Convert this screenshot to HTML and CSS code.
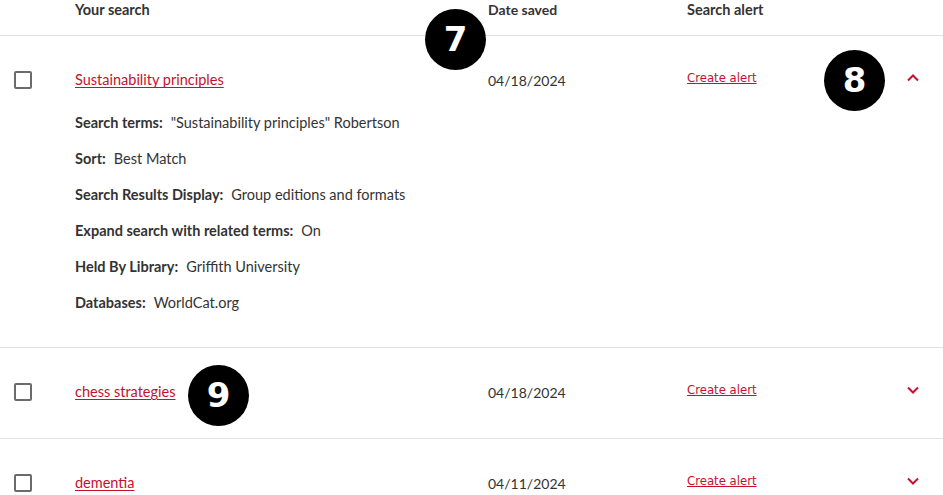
FILE: index.html
```html
<!DOCTYPE html>
<html lang="en">
<head>
<meta charset="utf-8">
<title>Saved searches</title>
<link rel="stylesheet" href="styles.css">
</head>
<body>
<div class="page">
  <div class="row head">
    <div class="c-check"></div>
    <div class="c-search">Your search</div>
    <div class="c-date">Date saved</div>
    <div class="c-alert">Search alert</div>
    <div class="c-toggle"></div>
  </div>

  <div class="row item">
    <div class="c-check"><span class="box"></span></div>
    <div class="c-search">
      <a class="link" href="#">Sustainability principles</a>
      <dl class="details">
        <div class="d"><dt>Search terms:</dt><dd>"Sustainability principles" Robertson</dd></div>
        <div class="d"><dt>Sort:</dt><dd>Best Match</dd></div>
        <div class="d"><dt>Search Results Display:</dt><dd>Group editions and formats</dd></div>
        <div class="d"><dt>Expand search with related terms:</dt><dd>On</dd></div>
        <div class="d"><dt>Held By Library:</dt><dd>Griffith University</dd></div>
        <div class="d"><dt>Databases:</dt><dd>WorldCat.org</dd></div>
      </dl>
    </div>
    <div class="c-date">04/18/2024</div>
    <div class="c-alert"><a class="alert" href="#">Create alert</a></div>
    <div class="c-toggle">
      <svg width="14" height="10" viewBox="0 0 14 10"><path d="M2 7.5 L7 2.5 L12 7.5" fill="none" stroke="#c8102e" stroke-width="2"/></svg>
    </div>
  </div>

  <div class="row item">
    <div class="c-check"><span class="box"></span></div>
    <div class="c-search"><a class="link" href="#">chess strategies</a></div>
    <div class="c-date">04/18/2024</div>
    <div class="c-alert"><a class="alert" href="#">Create alert</a></div>
    <div class="c-toggle">
      <svg width="14" height="10" viewBox="0 0 14 10"><path d="M2 2.5 L7 7.5 L12 2.5" fill="none" stroke="#c8102e" stroke-width="2"/></svg>
    </div>
  </div>

  <div class="row item">
    <div class="c-check"><span class="box"></span></div>
    <div class="c-search"><a class="link" href="#">dementia</a></div>
    <div class="c-date">04/11/2024</div>
    <div class="c-alert"><a class="alert" href="#">Create alert</a></div>
    <div class="c-toggle">
      <svg width="14" height="10" viewBox="0 0 14 10"><path d="M2 2.5 L7 7.5 L12 2.5" fill="none" stroke="#c8102e" stroke-width="2"/></svg>
    </div>
  </div>

  <span class="badge b7">7</span>
  <span class="badge b8">8</span>
  <span class="badge b9">9</span>
</div>
</body>
</html>
```

FILE: styles.css
```css
* { box-sizing: border-box; }
html, body { margin: 0; padding: 0; background: #fff; }
body {
  font-family: Lato, "Open Sans", sans-serif;
  font-size: 14.5px;
  color: #333;
  overflow: hidden;
}
.page { position: relative; width: 943px; }
.row {
  display: grid;
  grid-template-columns: 75px 413px 199px 206px 50px;
  line-height: 20px;
  border-bottom: 1px solid #e0e0e0;
}
.head {
  font-weight: 700;
  color: #333;
  padding: 0 0 15px;
}
.item { padding: 34px 0 35px; }
.c-check { padding-left: 14px; padding-top: 1px; }
.c-date { font-size: 14px; }
.item .c-date { padding-top: 1px; }
.box {
  display: block;
  width: 18px;
  height: 18px;
  border: 2px solid #6b6b6b;
  border-radius: 2px;
}
.link { color: #c8102e; text-decoration: underline; text-underline-offset: 2px; }
.c-alert { display: flex; align-items: flex-start; height: 20px; }
.alert {
  color: #c8102e;
  font-family: "DejaVu Sans Condensed", "DejaVu Sans", sans-serif;
  font-size: 13px;
  line-height: 16px;
  text-decoration: underline;
  display: block;
}
.c-toggle { display: flex; justify-content: flex-start; padding-left: 13px; padding-top: 3px; height: 20px; }
.c-toggle svg { display: block; }
.details { margin: 23px 0 -1px; display: flex; flex-direction: column; gap: 16px; }
.d { display: flex; gap: 8px; }
.details dt { font-weight: 700; }
.details dd { margin: 0; }
.badge {
  position: absolute;
  width: 61px;
  height: 61px;
  border-radius: 50%;
  background: #000;
  color: #fff;
  font-family: "DejaVu Sans", sans-serif;
  font-weight: 700;
  font-size: 34px;
  line-height: 61px;
  text-align: center;
}
.b7 { left: 425px; top: 9px; }
.b8 { left: 824px; top: 50px; }
.b9 { left: 188px; top: 365px; }
```
